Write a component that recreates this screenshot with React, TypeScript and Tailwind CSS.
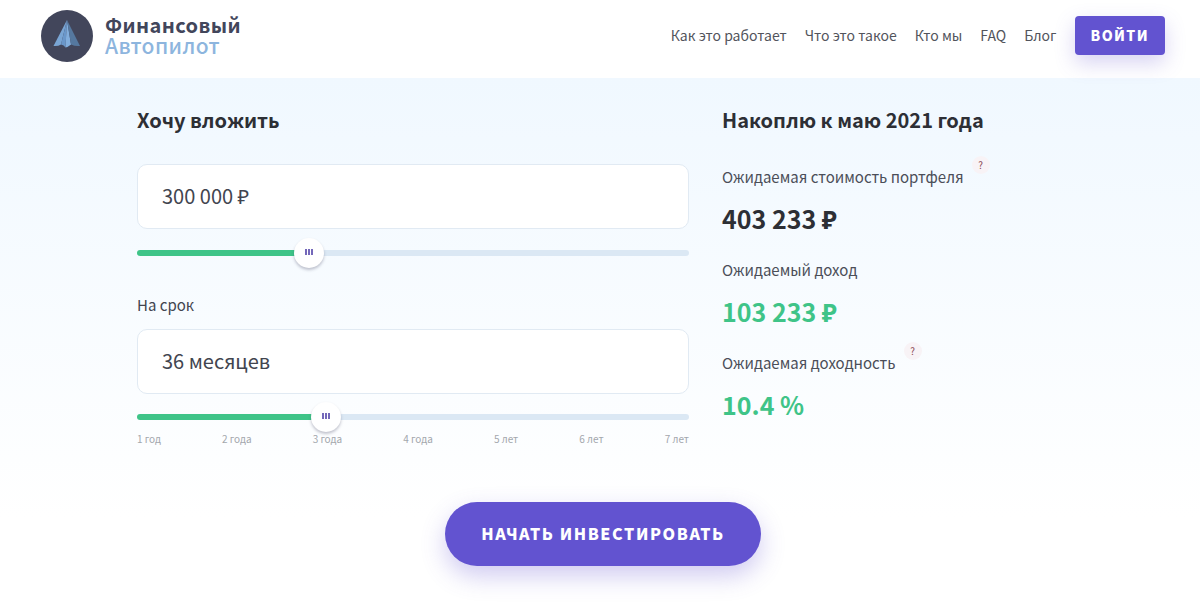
import { useState } from "react";

const NAV = ["Как это работает", "Что это такое", "Кто мы", "FAQ", "Блог"];
const YEARS = ["1 год", "2 года", "3 года", "4 года", "5 лет", "6 лет", "7 лет"];

function Logo() {
  return (
    <a href="#" className="flex items-center gap-3">
      <svg viewBox="0 0 52 52" className="size-[52px]" aria-hidden="true">
        <circle cx="26" cy="26" r="26" fill="#42465b" />
        <path d="M26 10 L12.5 36 Q17 36.5 20 34.5 Z" fill="#79a5d4" />
        <path d="M26 10 L20 34.5 Q23 35 24.5 37.5 Z" fill="#6a97ca" />
        <path d="M26 10 L24.5 37.5 Q27 37 30 34.5 Z" fill="#82aedd" />
        <path d="M26 10 L30 34.5 Q34 36.5 39 36 Z" fill="#55789f" />
      </svg>
      <span className="flex flex-col pb-[3px] leading-5 tracking-wide">
        <span className="text-xl leading-5 font-bold text-[#42465b]">Финансовый</span>
        <span className="text-[21px] leading-5 font-medium text-[#8db5de]">Автопилот</span>
      </span>
    </a>
  );
}

type SliderProps = {
  label: string;
  min: number;
  max: number;
  step: number;
  value: number;
  onChange: (value: number) => void;
};

function Slider({ label, min, max, step, value, onChange }: SliderProps) {
  const share = (value - min) / (max - min);
  const stop = `calc(15px + (100% - 30px) * ${share})`;
  return (
    <input
      type="range"
      aria-label={label}
      min={min}
      max={max}
      step={step}
      value={value}
      onChange={(e) => onChange(Number(e.target.value))}
      style={{ backgroundImage: `linear-gradient(to right, #3fc488 ${stop}, #dbe8f4 ${stop})` }}
      className="block h-[6px] w-full cursor-pointer appearance-none rounded-full [&::-webkit-slider-thumb]:size-[30px] [&::-webkit-slider-thumb]:appearance-none [&::-webkit-slider-thumb]:rounded-full [&::-webkit-slider-thumb]:bg-white [&::-webkit-slider-thumb]:bg-[linear-gradient(90deg,#7468ba_2px,#fff_2px,#fff_3px,#7468ba_3px,#7468ba_5px,#fff_5px,#fff_6px,#7468ba_6px)] [&::-webkit-slider-thumb]:bg-[length:8px_6px] [&::-webkit-slider-thumb]:bg-[position:center_11px] [&::-webkit-slider-thumb]:bg-no-repeat [&::-webkit-slider-thumb]:shadow-[0_2px_3px_rgba(60,60,90,0.3)]"
    />
  );
}

const FIELD =
  "block h-[65px] w-full rounded-[10px] border border-[#e1eaf3] bg-white px-6 pb-[2px] text-xl text-[#42454f] outline-none";

function Result({ label, value, hint, green }: { label: string; value: string; hint?: string; green?: boolean }) {
  return (
    <div>
      <dt className="flex h-7 items-center text-[15px] text-[#4b4e58]">
        {label}
        {hint && (
          <button
            type="button"
            aria-label={hint}
            className="mb-6 ml-2 size-[18px] rounded-full bg-[#f8f3f6] text-[10px] leading-[18px] text-[#8a4a55]"
          >
            ?
          </button>
        )}
      </dt>
      <dd className={`mt-[7px] text-[25px] leading-10 font-bold ${green ? "text-[#3fc488]" : "text-[#2d2f35]"}`}>
        {value}
      </dd>
    </div>
  );
}

export default function App() {
  const [amount, setAmount] = useState(300000);
  const [months, setMonths] = useState(36);
  const amountText = `${String(amount).replace(/\B(?=(\d{3})+$)/g, " ")} ₽`;

  return (
    <div className="min-h-screen bg-white font-['Noto_Sans_CJK_SC','Noto_Sans',sans-serif] text-[#2d2f35]">
      <header className="flex h-[78px] items-start justify-between pr-[35px] pl-[41px]">
        <div className="pt-[10px]">
          <Logo />
        </div>
        <nav className="flex items-center gap-[18px] pt-4 text-sm text-[#52545c]">
          {NAV.map((item) => (
            <a key={item} href="#" className="pb-[2px]">
              {item}
            </a>
          ))}
          <button
            type="button"
            className="h-[39px] rounded-[4px] bg-[#6253d0] px-4 pb-[2px] font-black tracking-widest text-white shadow-[0_8px_20px_rgba(98,83,208,0.25)]"
          >
            ВОЙТИ
          </button>
        </nav>
      </header>

      <main className="bg-linear-to-b from-[#f0f8ff] to-white to-[440px] pb-11 pl-[6px]">
        <div className="mx-auto grid max-w-[932px] grid-cols-[552fr_347fr] gap-x-[33px] pt-[22px]">
          <section>
            <h2 className="text-xl leading-10 font-bold">
              <label htmlFor="amount">Хочу вложить</label>
            </h2>
            <input
              id="amount"
              className={`mt-6 ${FIELD}`}
              value={amountText}
              onChange={(e) => setAmount(Math.min(1000000, Number(e.target.value.replace(/\D/g, ""))))}
            />
            <div className="pt-[21px]">
              <Slider label="Сумма" min={0} max={1000000} step={10000} value={amount} onChange={setAmount} />
            </div>
            <label htmlFor="term" className="mt-[35px] block text-[15px] leading-7 text-[#42454f]">
              На срок
            </label>
            <input
              id="term"
              className={`mt-[10px] ${FIELD}`}
              value={`${months} месяцев`}
              onChange={(e) => setMonths(Math.min(84, Math.max(12, Number(e.target.value.replace(/\D/g, "")))))}
            />
            <div className="pt-5">
              <Slider label="Срок" min={12} max={84} step={1} value={months} onChange={setMonths} />
            </div>
            <div className="mt-[11px] flex justify-between text-[10px] leading-4 text-[#a3a7ad]">
              {YEARS.map((year) => (
                <span key={year}>{year}</span>
              ))}
            </div>
          </section>

          <section>
            <h2 className="text-xl leading-10 font-bold">Накоплю к маю 2021 года</h2>
            <dl className="mt-[23px] flex flex-col gap-[18px]">
              <Result label="Ожидаемая стоимость портфеля" value="403 233 ₽" hint="О стоимости портфеля" />
              <Result label="Ожидаемый доход" value="103 233 ₽" green />
              <Result label="Ожидаемая доходность" value="10.4 %" hint="О доходности" green />
            </dl>
          </section>
        </div>

        <div className="mt-[55px] flex justify-center">
          <button
            type="button"
            className="h-16 rounded-full bg-[#6253d0] px-9 pb-[2px] text-base font-black tracking-widest text-white shadow-[0_10px_24px_rgba(98,83,208,0.3)]"
          >
            НАЧАТЬ ИНВЕСТИРОВАТЬ
          </button>
        </div>
      </main>
    </div>
  );
}
